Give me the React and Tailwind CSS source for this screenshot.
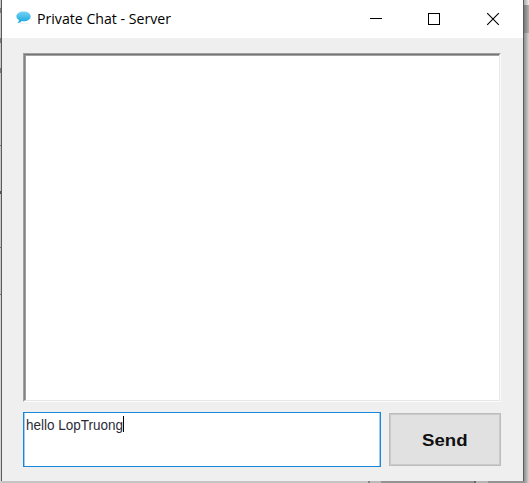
function ChatIcon() {
  return (
    <svg width="18" height="16" viewBox="0 0 18 16" className="mb-[2px] block">
      <defs>
        <linearGradient id="bubble" x1="0" y1="0" x2="0" y2="1">
          <stop offset="0" stopColor="#79d3f3" />
          <stop offset="1" stopColor="#12a5df" />
        </linearGradient>
      </defs>
      <path d="M6 13.300h9" stroke="#ececec" strokeWidth="0.8" />
      <path
        d="M9.700 1.500C5.400 1.500 2 3.600 2 6.300c0 1.700 1.100 3 2.700 3.800.1 1.200-.5 2.200-1.500 2.900 1.900.1 3.500-.7 4.400-1.900.7.1 1.300.2 2.100.2 4.200 0 7.500-2.100 7.500-4.900S13.900 1.500 9.700 1.500z"
        transform="translate(0.500 0) scale(0.940 1)"
        fill="url(#bubble)"
      />
    </svg>
  );
}

function TitleBar() {
  return (
    <header className="flex h-[38px] shrink-0 items-center bg-white pl-3">
      <ChatIcon />
      <svg width="340" height="38" className="ml-[5px] block shrink-0">
        <text
          x="0"
          y="24"
          textLength="134"
          lengthAdjust="spacingAndGlyphs"
          className="fill-black font-['Open_Sans','Noto_Sans',sans-serif] text-[15px]"
        >
          Private Chat - Server
        </text>
      </svg>
      <svg width="144" height="38" viewBox="367 0 144 38" className="-ml-[10px] block shrink-0" fill="none" stroke="#000">
        <path d="M370 18.500h12" />
        <rect x="428.500" y="13.500" width="11" height="11" />
        <path d="M487.200 13.200l11.600 11.600M498.800 13.200l-11.600 11.600" strokeWidth="1.100" />
      </svg>
    </header>
  );
}

function MessageLog() {
  return (
    <div className="h-[349px] w-[478px] border border-t-[#a0a0a0] border-r-[#f9f9f9] border-b-[#fcfcfc] border-l-[#a0a0a0]">
      <div className="h-full border border-t-[#747474] border-r-[#e9e9e9] border-b-[#e6e6e6] border-l-[#838383]">
        <div className="h-full border-t border-l border-t-[#a3a3a3] border-l-[#a0a0a0] bg-white" />
      </div>
    </div>
  );
}

function Composer() {
  return (
    <div className="mt-[10px] flex">
      <div className="h-[55px] w-[358px] border border-[#1787dc] bg-white">
        <div className="flex h-full border-x border-[#9fcdf2] pt-[3px] pl-px">
          <svg width="110" height="20" className="-mr-[13px] block shrink-0">
            <text
              x="0"
              y="13.500"
              textLength="97"
              lengthAdjust="spacingAndGlyphs"
              className="fill-[#2c2c38] font-['Liberation_Sans',Arial,sans-serif] text-[14.500px]"
            >
              hello LopTruong
            </text>
          </svg>
          <div className="h-[16px] w-px bg-black" />
        </div>
      </div>
      <button className="mt-px ml-2 flex h-[53px] w-[112px] items-center justify-center border border-[#bdbdbd] bg-[#e1e1e1] shadow-[inset_0_0_0_1px_#cacaca]">
        <svg width="46" height="22" className="block">
          <text
            x="0"
            y="17"
            textLength="45.500"
            lengthAdjust="spacingAndGlyphs"
            className="fill-[#101010] font-['Liberation_Sans',Arial,sans-serif] text-[17px] font-bold"
          >
            Send
          </text>
        </svg>
      </button>
    </div>
  );
}

// Slivers of the windows behind this one, visible along its left edge.
function LeftBackdrop() {
  return (
    <div className="flex w-px shrink-0 flex-col bg-[#c7c7c7]">
      <div className="mt-[8px] h-[5px] bg-[#777b80]" />
      <div className="mt-[25px] h-[5px] bg-[#737a80]" />
      <div className="mt-[25px] h-[5px] bg-[#737a80]" />
      <div className="mt-[72px] h-px bg-[#777777]" />
      <div className="mt-[45px] h-[3px] bg-[#555555]" />
      <div className="mt-[53px] h-px bg-[#777777]" />
      <div className="mt-[46px] h-px bg-[#777777]" />
      <div className="grow bg-[#d4d4d4]" />
    </div>
  );
}

// Strip of the windows behind, visible below the bottom edge.
function BottomBackdrop() {
  return (
    <div className="flex h-[2px] w-[523px] bg-[#bfbfbf]">
      <div className="w-[367px] bg-[#c4c4c4]" />
      <div className="w-[2px] bg-[#858585]" />
      <div className="w-[11px] bg-[#bababa]" />
      <div className="w-[93px] bg-[#939393]" />
      <div className="w-[2px] bg-[#696969]" />
      <div className="w-[12px] bg-[#b5b5b5]" />
      <div className="grow bg-[#949494]" />
    </div>
  );
}

export default function App() {
  return (
    <div className="flex h-[483px] w-[529px] overflow-hidden bg-[#cbcbcb]">
      <LeftBackdrop />
      <div className="flex grow flex-col">
        <main className="flex h-[481px] w-[523px] flex-col border-x border-[#5b5b5b] bg-[#efefef]">
          <TitleBar />
          <div className="pt-[15px] pl-[21px]">
            <MessageLog />
            <Composer />
          </div>
        </main>
        <BottomBackdrop />
      </div>
      <div className="flex w-[5px] shrink-0 flex-col bg-linear-to-r from-[#909090] to-[#d4d4d4]">
        <div className="h-[5px] bg-linear-to-r from-[#aaaaaa] to-[#eeeeee]" />
        <div className="h-[28px] bg-linear-to-r from-[#777777] to-[#b0b0b0]" />
      </div>
    </div>
  );
}
